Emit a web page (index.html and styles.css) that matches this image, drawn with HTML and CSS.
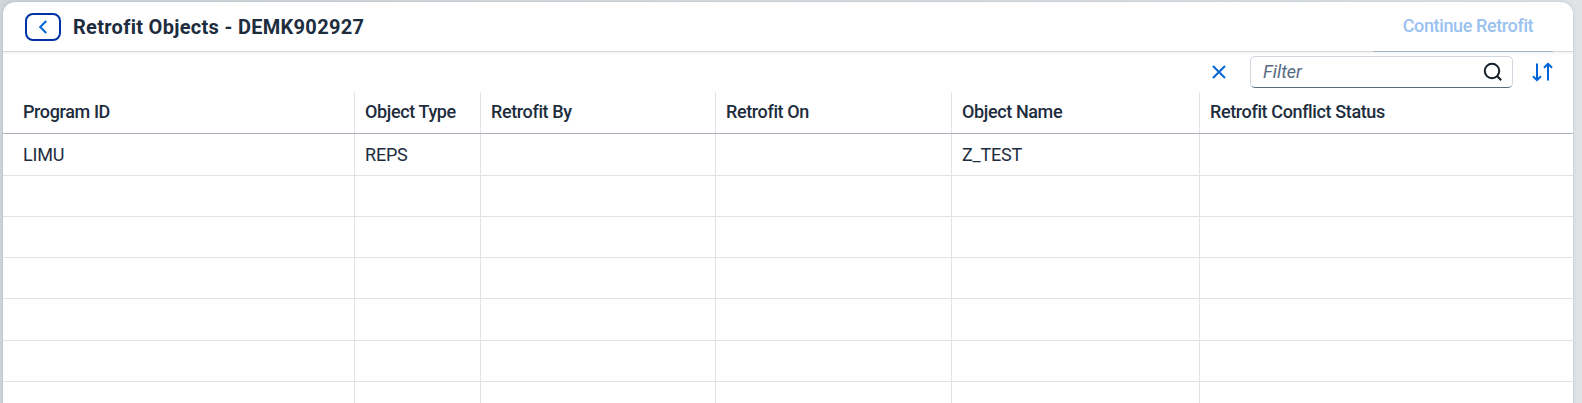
FILE: index.html
```html
<!DOCTYPE html>
<html lang="en">
<head>
<meta charset="utf-8">
<title>Retrofit Objects</title>
<link rel="stylesheet" href="styles.css">
</head>
<body>
<main class="panel">
  <header class="bar">
    <button class="back" aria-label="Back"><svg width="12" height="16" viewBox="0 0 12 16"><path d="M9.2 2 3.2 8l6 6"/></svg></button>
    <h1 class="title">Retrofit Objects - DEMK902927</h1>
    <button class="continue" disabled>Continue Retrofit</button>
  </header>
  <div class="toolbar">
    <svg class="clear" width="14" height="14" viewBox="0 0 14 14"><path d="M1 1 13 13M13 1 1 13"/></svg>
    <div class="search">
      <span class="placeholder">Filter</span>
      <svg class="lens" width="20" height="20" viewBox="0 0 20 20"><circle cx="9" cy="9" r="7.2"/><path d="m14 14 4.2 4.2"/></svg>
    </div>
    <svg class="sort" width="22" height="20" viewBox="0 0 22 20"><path d="M6 1.5V18M2 14.2 6 18.2l4-4M17 18.5V2M13 5.8l4-4 4 4"/></svg>
  </div>
  <div class="grid">
    <div class="row head"><div>Program ID</div><div>Object Type</div><div>Retrofit By</div><div>Retrofit On</div><div>Object Name</div><div>Retrofit Conflict Status</div></div>
    <div class="row tall"><div>LIMU</div><div>REPS</div><div></div><div></div><div>Z_TEST</div><div></div></div>
    <div class="row"><div></div><div></div><div></div><div></div><div></div><div></div></div>
    <div class="row"><div></div><div></div><div></div><div></div><div></div><div></div></div>
    <div class="row"><div></div><div></div><div></div><div></div><div></div><div></div></div>
    <div class="row tall"><div></div><div></div><div></div><div></div><div></div><div></div></div>
    <div class="row"><div></div><div></div><div></div><div></div><div></div><div></div></div>
    <div class="row"><div></div><div></div><div></div><div></div><div></div><div></div></div>
  </div>
</main>
</body>
</html>
```
FILE: styles.css
```css
* { box-sizing: border-box; }
html, body { height: 100%; }
body {
  margin: 0;
  padding: 2px 9px 0 3px;
  overflow: hidden;
  background: linear-gradient(90deg, #d0d5d9, #dfe3e6);
  font-family: Roboto, "Liberation Sans", sans-serif;
  color: #1d2d3e;
}
.panel {
  height: 420px;
  background: #fff;
  border-radius: 12px 12px 0 0;
  box-shadow: 0 0 3px rgba(34, 53, 72, .22);
  overflow: hidden;
}
.bar {
  display: flex;
  align-items: center;
  height: 50px;
  padding: 0 20px 0 22px;
  border-bottom: 1px solid #d9d9d9;
  box-shadow: 0 1px 3px rgba(34, 53, 72, .08);
}
.back {
  display: flex;
  align-items: center;
  justify-content: center;
  width: 36px;
  height: 28px;
  padding: 0;
  border: 2px solid #0032a5;
  border-radius: 8px;
  background: #fff;
}
svg { fill: none; stroke: #0064d9; stroke-width: 2; }
.title {
  flex: 1;
  margin: 0 0 0 12px;
  font-size: 20px;
  font-weight: 700;
  letter-spacing: .3px;
  line-height: 28px;
}
.continue {
  align-self: stretch;
  width: 180px;
  height: 50px;
  margin-bottom: -1px;
  padding: 0 0 2px 10px;
  border: 0;
  border-bottom: 1px solid #a8b3bd;
  background: transparent;
  color: #99c1f0;
  font: 500 18px/47px Roboto, "Liberation Sans", sans-serif;
  letter-spacing: -.38px;
}
.toolbar {
  display: flex;
  align-items: center;
  justify-content: flex-end;
  height: 40px;
  padding-right: 20px;
}
.clear { margin-right: 24px; }
.search {
  display: flex;
  align-items: center;
  justify-content: space-between;
  width: 263px;
  height: 32px;
  padding: 0 9px 0 12px;
  border: 1px solid #d0d7e0;
  border-bottom-color: #556b81;
  border-radius: 5px;
}
.placeholder { color: #556b82; font-size: 18px; font-style: italic; line-height: 28px; }
.lens { stroke: #131e29; }
.sort { margin-left: 18px; }
.row {
  display: grid;
  grid-template-columns: 352px 126px 235px 236px 248px 1fr;
  height: 41px;
  border-bottom: 1px solid #e3e3e3;
  font-size: 18px;
  letter-spacing: -.2px;
  line-height: 41px;
}
.row.tall { height: 42px; }
.row.head {
  height: 42px;
  border-bottom-color: #a8b3bd;
  font-weight: 500;
  letter-spacing: -.38px;
  line-height: 40px;
}
.row > div { padding-left: 10px; border-right: 1px solid #e3e3e3; white-space: nowrap; }
.row > div:first-child { padding-left: 20px; }
.row > div:last-child { border-right: 0; }
```
